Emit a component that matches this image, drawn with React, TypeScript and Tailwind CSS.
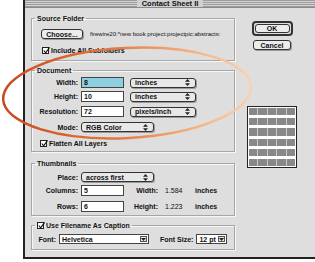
import React from 'react';

const UpDown = () => (
    <svg width="5" height="7" viewBox="0 0 5 7">
        <path d="M2.5 0 L5 2.8 H0 Z M0 4.2 H5 L2.5 7 Z" fill="#222" />
    </svg>
);

const Check = () => (
    <span className="relative inline-flex h-[7px] w-[7px] shrink-0 border border-[#222] bg-white">
        <svg viewBox="0 0 9 9" className="absolute -top-px left-0 h-[7px] w-[7px]">
            <path d="M1 4.5 L3.4 7.5 L8.5 0.5" stroke="#111" strokeWidth="1.4" fill="none" />
        </svg>
    </span>
);

const Popup = ({ label, w }: { label: string; w: string }) => (
    <div className={`${w} flex h-[10px] items-center justify-between rounded-[3px] border border-[#333] bg-[#e8e8e8] pl-[4px] pr-[5px] shadow-[1px_1px_0_#9a9a9a]`}>
        <span>{label}</span>
        <UpDown />
    </div>
);

const Field = ({ value, hl }: { value: string; hl?: boolean }) => (
    <div className={`flex h-[11px] w-[43px] items-center border border-[#444] pl-[2px] ${hl ? 'bg-[#8ccfe0]' : 'bg-white'}`}>
        {value}
    </div>
);

const Combo = ({ value, w }: { value: string; w: string }) => (
    <div className={`${w} flex h-[10px] items-center justify-between border border-[#444] bg-white pl-[2px]`}>
        <span>{value}</span>
        <span className="mr-px flex h-[6px] w-[7px] items-center justify-center border border-[#555] bg-[#e6e6e6]">
            <svg width="5" height="3" viewBox="0 0 5 3">
                <path d="M0 0 H5 L2.5 3 Z" fill="#222" />
            </svg>
        </span>
    </div>
);

const Label = ({ children }: { children: React.ReactNode }) => (
    <span className="w-[49px] pr-[3px] text-right">{children}</span>
);

const Group = ({ legend, children, className = '' }: { legend: React.ReactNode; children: React.ReactNode; className?: string }) => (
    <fieldset className={`border border-[#a6a6a6] shadow-[1px_1px_0_#f7f7f7,inset_1px_1px_0_#f7f7f7] ${className}`}>
        <legend className="ml-[3px] flex items-center gap-[2px] px-[2px] leading-[9px]">{legend}</legend>
        {children}
    </fieldset>
);

export default function App() {
    return (
        <div className="relative h-[262px] w-[315px] overflow-hidden bg-white font-['Liberation_Sans',Arial,sans-serif] text-[7px] font-bold leading-[9px] text-[#111]">
            <div className="ml-[23px] flex h-[259px] w-[292px] flex-col border-b-2 border-l-2 border-[#222] bg-[#dedede]">
                {/* title bar */}
                <div className="flex h-[8px] items-center justify-center border-b border-[#8a8a8a] bg-[repeating-linear-gradient(to_bottom,#9c9c9c_0px,#9c9c9c_1px,#d2d2d2_1px,#d2d2d2_2px)]">
                    <span className="bg-[#d0d0d0] px-[5px] text-[7.5px] leading-[7px]">Contact Sheet II</span>
                </div>

                <div className="flex pl-[6px] pt-[6px]">
                    {/* left column */}
                    <div className="flex w-[204px] flex-col">
                        <Group legend="Source Folder" className="pb-[6px]">
                            <div className="mt-[6px] flex h-[10px] items-center">
                                <div className="ml-[9px] flex h-[10px] w-[42px] items-center justify-center rounded-[3px] border border-[#333] bg-[#ececec] shadow-[1px_1px_0_#9a9a9a]">
                                    Choose...
                                </div>
                                <span className="ml-[7px] text-[6px] font-normal">firewire20:*new book project:projectpic:abstracts:</span>
                            </div>
                            <div className="ml-[10px] mt-[7px] flex h-[8px] items-center gap-[2px]">
                                <Check />
                                <span>Include All Subfolders</span>
                            </div>
                        </Group>

                        <Group legend="Document" className="mt-[5px] pb-[4px]">
                            <div className="mt-[2px] flex items-center">
                                <Label>Width:</Label>
                                <Field value="8" hl />
                                <div className="ml-[6px]"><Popup label="inches" w="w-[66px]" /></div>
                            </div>
                            <div className="mt-[3px] flex items-center">
                                <Label>Height:</Label>
                                <Field value="10" />
                                <div className="ml-[6px]"><Popup label="inches" w="w-[66px]" /></div>
                            </div>
                            <div className="mt-[4px] flex items-center">
                                <Label>Resolution:</Label>
                                <Field value="72" />
                                <div className="ml-[6px]"><Popup label="pixels/inch" w="w-[66px]" /></div>
                            </div>
                            <div className="mt-[5px] flex items-center">
                                <Label>Mode:</Label>
                                <Popup label="RGB Color" w="w-[73px]" />
                            </div>
                            <div className="ml-[8px] mt-[7px] flex h-[8px] items-center gap-[2px]">
                                <Check />
                                <span>Flatten All Layers</span>
                            </div>
                        </Group>

                        <Group legend="Thumbnails" className="mt-[7px] pb-[3px]">
                            <div className="mt-[4px] flex items-center">
                                <Label>Place:</Label>
                                <Popup label="across first" w="w-[73px]" />
                            </div>
                            <div className="mt-[3px] flex items-center">
                                <Label>Columns:</Label>
                                <Field value="5" />
                                <span className="w-[34px] text-right">Width:</span>
                                <span className="ml-[7px] w-[30px] font-normal">1.584</span>
                                <span>inches</span>
                            </div>
                            <div className="mt-[5px] flex items-center">
                                <Label>Rows:</Label>
                                <Field value="6" />
                                <span className="w-[34px] text-right">Height:</span>
                                <span className="ml-[7px] w-[30px] font-normal">1.223</span>
                                <span>inches</span>
                            </div>
                        </Group>

                        <Group
                            legend={
                                <>
                                    <Check />
                                    <span>Use Filename As Caption</span>
                                </>
                            }
                            className="mt-[5px] pb-[5px]"
                        >
                            <div className="mt-[4px] flex items-center">
                                <span className="w-[27px] pr-[3px] text-right">Font:</span>
                                <Combo value="Helvetica" w="w-[90px]" />
                                <span className="ml-[11px] pr-[3px]">Font Size:</span>
                                <Combo value="12 pt" w="w-[31px]" />
                            </div>
                        </Group>
                    </div>

                    {/* right column */}
                    <div className="ml-[12px] flex w-[50px] flex-col items-center">
                        <div className="mt-[7px] rounded-[4px] border-2 border-[#333] p-px">
                            <div className="flex h-[9px] w-[35px] items-center justify-center rounded-[3px] border border-[#333] bg-[#ececec]">
                                OK
                            </div>
                        </div>
                        <div className="mt-[4px] flex h-[10px] w-[38px] items-center justify-center rounded-[3px] border border-[#333] bg-[#ececec] shadow-[1px_1px_0_#9a9a9a]">
                            Cancel
                        </div>
                        <div className="mt-[56px] flex h-[62px] w-[50px] flex-col gap-[3px] border border-[#222] bg-white p-px">
                            {[0, 1, 2, 3, 4, 5].map((r) => (
                                <div key={r} className="flex h-[6px] flex-1 gap-px bg-[#c9c9c9]">
                                    {[0, 1, 2, 3, 4].map((c) => (
                                        <div key={c} className="flex-1 bg-[#888]" />
                                    ))}
                                </div>
                            ))}
                        </div>
                    </div>
                </div>
            </div>

            {/* hand-drawn ellipse over the dialog */}
            <svg className="pointer-events-none absolute left-0 top-0" width="315" height="262" viewBox="0 0 315 262">
                <defs>
                    <linearGradient id="ring" gradientUnits="userSpaceOnUse" x1="0" y1="0" x2="255" y2="0">
                        <stop offset="0" stopColor="#c8461c" />
                        <stop offset="0.45" stopColor="#e27a42" />
                        <stop offset="0.75" stopColor="#f4b080" />
                        <stop offset="1" stopColor="#fad4b4" />
                    </linearGradient>
                </defs>
                <ellipse cx="127" cy="93" rx="124" ry="45" transform="rotate(-3 127 93)" fill="none" stroke="url(#ring)" strokeWidth="2.5" />
            </svg>
        </div>
    );
}
